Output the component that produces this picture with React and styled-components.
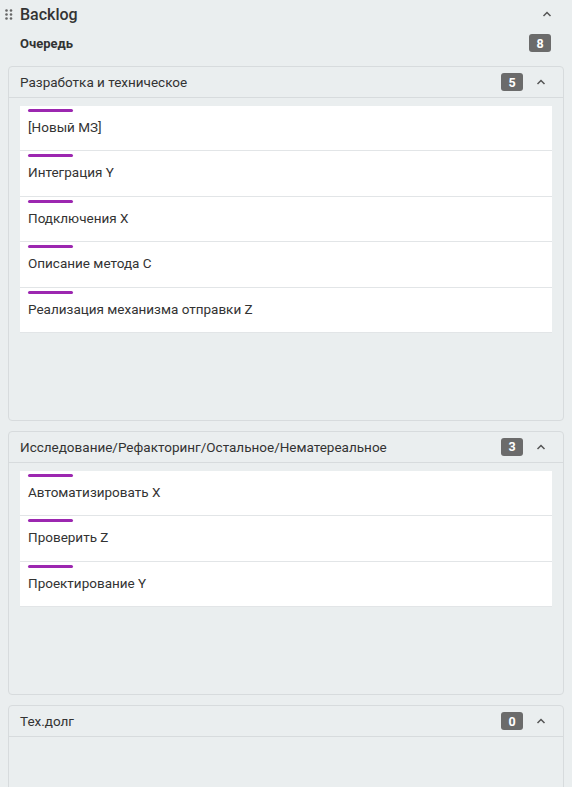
import React from 'react'
import styled, { createGlobalStyle } from 'styled-components'

const Global = createGlobalStyle`
  html, body {
    margin: 0;
    padding: 0;
    background: #eaeeef;
    font-family: Roboto, "Liberation Sans", sans-serif;
    color: #333;
  }
`

const Page = styled.div`
  width: 572px;
  height: 787px;
  background: #eaeeef;
  overflow: hidden;
`

const TopBar = styled.div`
  display: flex;
  align-items: center;
  height: 28px;
  padding: 0 20px 0 5px;
`

const Title = styled.div`
  flex: 1;
  font-size: 16px;
  font-weight: 500;
  color: #333;
  margin-left: 7px;
`

const QueueRow = styled.div`
  display: flex;
  align-items: center;
  justify-content: space-between;
  height: 30px;
  padding: 0 21px 0 20px;
  margin-bottom: 8px;
`

const QueueLabel = styled.div`
  font-size: 13px;
  font-weight: 700;
  color: #333;
`

const Badge = styled.span`
  display: inline-flex;
  align-items: center;
  justify-content: center;
  min-width: 22px;
  height: 18px;
  padding: 0 5px;
  box-sizing: border-box;
  border-radius: 3px;
  background: #6b6b6b;
  color: #fff;
  font-size: 12.5px;
  font-weight: 700;
`

const Sections = styled.div`
  display: flex;
  flex-direction: column;
  gap: 10px;
  padding: 0 8px;
`

const Section = styled.section`
  border: 1px solid #d7dbdd;
  border-radius: 4px;
`

const SectionHead = styled.div`
  display: flex;
  align-items: center;
  height: 30px;
  padding: 0 17px 0 11px;
  border-bottom: 1px solid #d7dbdd;
`

const SectionTitle = styled.div`
  flex: 1;
  font-size: 13.5px;
  color: #333;
`

const SectionBody = styled.div`
  padding: 8px 11px 87px;
`

const Card = styled.div`
  height: 45.4px;
  box-sizing: border-box;
  background: #fff;
  border-bottom: 1px solid #e2e5e7;
  padding: 3px 8px 0;
`

const Bar = styled.div`
  width: 45px;
  height: 3px;
  border-radius: 2px;
  background: #9c27b0;
`

const CardText = styled.div`
  margin-top: 7px;
  font-size: 13.5px;
  line-height: 16px;
  color: #333;
`

const Chevron = styled.svg`
  width: 10px;
  height: 6px;
  margin-left: ${p => p.$gap || 0}px;
`

const Up = ({ gap }) => (
  <Chevron $gap={gap} viewBox="0 0 10 6">
    <path d="M1.5 5 L5 1.5 L8.5 5" fill="none" stroke="#555" strokeWidth="1.5" />
  </Chevron>
)

const Grip = () => (
  <svg width="8" height="11" viewBox="0 0 8 11">
    {[1.5, 5.5, 9.5].map(y =>
      [1.5, 6].map(x => <circle key={x + '-' + y} cx={x} cy={y} r="1.3" fill="#666" />)
    )}
  </svg>
)

const groups = [
  {
    title: 'Разработка и техническое',
    items: ['[Новый МЗ]', 'Интеграция Y', 'Подключения X', 'Описание метода C', 'Реализация механизма отправки Z'],
  },
  {
    title: 'Исследование/Рефакторинг/Остальное/Нематереальное',
    items: ['Автоматизировать X', 'Проверить Z', 'Проектирование Y'],
  },
  { title: 'Тех.долг', items: [] },
]

export default function App() {
  return (
    <Page>
      <Global />
      <TopBar>
        <Grip />
        <Title>Backlog</Title>
        <Up />
      </TopBar>
      <QueueRow>
        <QueueLabel>Очередь</QueueLabel>
        <Badge>8</Badge>
      </QueueRow>
      <Sections>
        {groups.map(g => (
          <Section key={g.title}>
            <SectionHead>
              <SectionTitle>{g.title}</SectionTitle>
              <Badge>{g.items.length}</Badge>
              <Up gap={13} />
            </SectionHead>
            <SectionBody>
              {g.items.map(it => (
                <Card key={it}>
                  <Bar />
                  <CardText>{it}</CardText>
                </Card>
              ))}
            </SectionBody>
          </Section>
        ))}
      </Sections>
    </Page>
  )
}
